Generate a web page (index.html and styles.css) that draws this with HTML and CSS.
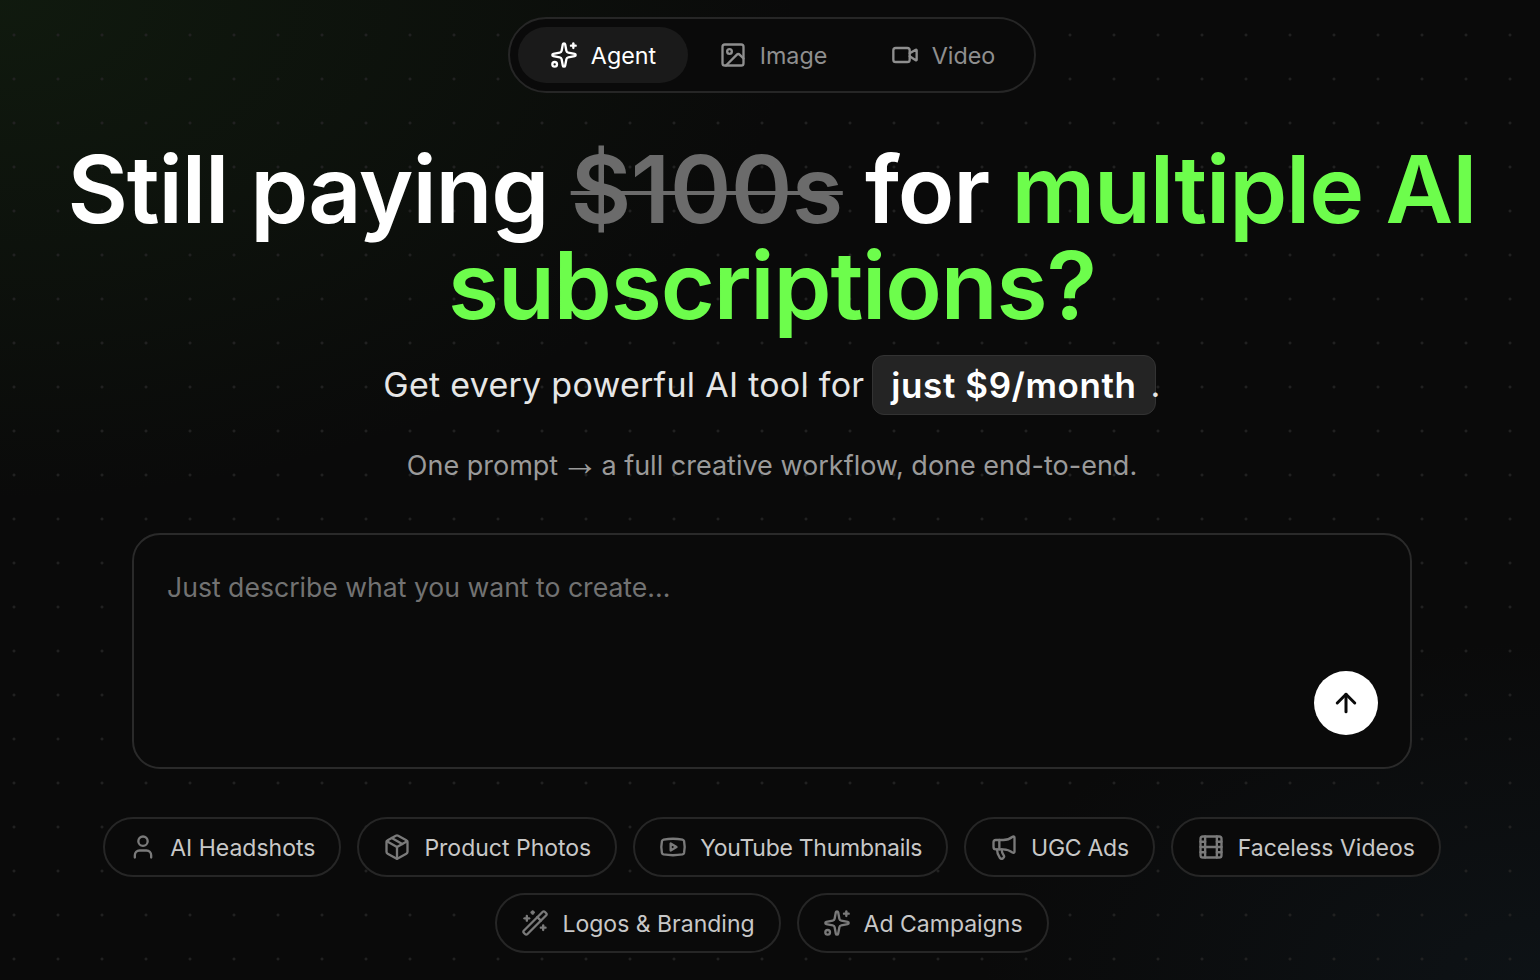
FILE: index.html
```html
<!DOCTYPE html>
<html lang="en">
<head>
    <meta charset="UTF-8">
    <meta name="viewport" content="width=device-width, initial-scale=1.0">
    <title>Still paying for multiple AI subscriptions?</title>
    <link rel="stylesheet" href="styles.css">
</head>
<body>
    <div class="page">
        <!-- mode switch -->
        <nav class="modes">
            <div class="mode active">
                <svg class="icon" viewBox="0 0 24 24"><path d="M11.017 2.814a1 1 0 0 1 1.966 0l1.051 5.558a2 2 0 0 0 1.594 1.594l5.558 1.051a1 1 0 0 1 0 1.966l-5.558 1.051a2 2 0 0 0-1.594 1.594l-1.051 5.558a1 1 0 0 1-1.966 0l-1.051-5.558a2 2 0 0 0-1.594-1.594l-5.558-1.051a1 1 0 0 1 0-1.966l5.558-1.051a2 2 0 0 0 1.594-1.594z"/><path d="M20 2v4"/><path d="M22 4h-4"/><circle cx="4" cy="20" r="2"/></svg>
                <span>Agent</span>
            </div>
            <div class="mode">
                <svg class="icon" viewBox="0 0 24 24"><rect x="3" y="3" width="18" height="18" rx="2"/><circle cx="9" cy="9" r="2"/><path d="m21 15-3.086-3.086a2 2 0 0 0-2.828 0L6 21"/></svg>
                <span>Image</span>
            </div>
            <div class="mode">
                <svg class="icon" viewBox="0 0 24 24"><path d="m16 13 5.223 3.482a.5.5 0 0 0 .777-.416V7.87a.5.5 0 0 0-.752-.432L16 10.5"/><rect x="2" y="6" width="14" height="12" rx="2"/></svg>
                <span>Video</span>
            </div>
        </nav>

        <!-- headline -->
        <h1 class="headline">Still paying <s class="old-price">$100s</s> for <span class="accent">multiple AI subscriptions?</span></h1>
        <p class="subline">Get every powerful AI tool for <span class="price-tag">just $9/month</span>.</p>
        <p class="tagline">One prompt <span class="arrow">→</span> a full creative workflow, done end-to-end.</p>

        <!-- prompt box -->
        <div class="prompt">
            <div class="prompt-text">Just describe what you want to create...</div>
            <button class="send" type="button" aria-label="Send">
                <svg class="icon" viewBox="0 0 24 24"><path d="m5 12 7-7 7 7"/><path d="M12 19V5"/></svg>
            </button>
        </div>

        <!-- suggestions -->
        <div class="chips">
            <div class="chip">
                <svg class="icon" viewBox="0 0 24 24"><path d="M19 21v-2a4 4 0 0 0-4-4H9a4 4 0 0 0-4 4v2"/><circle cx="12" cy="7" r="4"/></svg>
                <span>AI Headshots</span>
            </div>
            <div class="chip">
                <svg class="icon" viewBox="0 0 24 24"><path d="M11 21.73a2 2 0 0 0 2 0l7-4A2 2 0 0 0 21 16V8a2 2 0 0 0-1-1.73l-7-4a2 2 0 0 0-2 0l-7 4A2 2 0 0 0 3 8v8a2 2 0 0 0 1 1.73z"/><path d="M12 22V12"/><path d="m3.3 7 8.7 5 8.7-5"/><path d="m7.5 4.27 9 5.15"/></svg>
                <span>Product Photos</span>
            </div>
            <div class="chip tight">
                <svg class="icon" viewBox="0 0 24 24"><path d="M2.5 17a24.12 24.12 0 0 1 0-10 2 2 0 0 1 1.4-1.4 49.56 49.56 0 0 1 16.2 0A2 2 0 0 1 21.5 7a24.12 24.12 0 0 1 0 10 2 2 0 0 1-1.4 1.4 49.55 49.55 0 0 1-16.2 0A2 2 0 0 1 2.5 17"/><path d="m10 15 5-3-5-3z"/></svg>
                <span>YouTube Thumbnails</span>
            </div>
            <div class="chip tight">
                <svg class="icon" viewBox="0 0 24 24"><path d="M11 6a13 13 0 0 0 8.4-2.8A1 1 0 0 1 21 4v12a1 1 0 0 1-1.6.8A13 13 0 0 0 11 14H5a2 2 0 0 1-2-2V8a2 2 0 0 1 2-2z"/><path d="M6 14a12 12 0 0 0 2.4 7.2 2 2 0 0 0 3.2-2.4A8 8 0 0 1 10 14"/><path d="M8 6v8"/></svg>
                <span>UGC Ads</span>
            </div>
            <div class="chip">
                <svg class="icon" viewBox="0 0 24 24"><rect x="3" y="3" width="18" height="18" rx="2"/><path d="M7 3v18"/><path d="M3 7.5h4"/><path d="M3 12h18"/><path d="M3 16.5h4"/><path d="M17 3v18"/><path d="M17 7.5h4"/><path d="M17 16.5h4"/></svg>
                <span>Faceless Videos</span>
            </div>
            <div class="chip">
                <svg class="icon" viewBox="0 0 24 24"><path d="m21.64 3.64-1.28-1.28a1.21 1.21 0 0 0-1.72 0L2.36 18.64a1.21 1.21 0 0 0 0 1.72l1.28 1.28a1.2 1.2 0 0 0 1.72 0L21.64 5.36a1.2 1.2 0 0 0 0-1.72"/><path d="m14 7 3 3"/><path d="M5 6v4"/><path d="M19 14v4"/><path d="M10 2v2"/><path d="M7 8H3"/><path d="M21 16h-4"/><path d="M11 3H9"/></svg>
                <span>Logos &amp; Branding</span>
            </div>
            <div class="chip">
                <svg class="icon" viewBox="0 0 24 24"><path d="M11.017 2.814a1 1 0 0 1 1.966 0l1.051 5.558a2 2 0 0 0 1.594 1.594l5.558 1.051a1 1 0 0 1 0 1.966l-5.558 1.051a2 2 0 0 0-1.594 1.594l-1.051 5.558a1 1 0 0 1-1.966 0l-1.051-5.558a2 2 0 0 0-1.594-1.594l-5.558-1.051a1 1 0 0 1 0-1.966l5.558-1.051a2 2 0 0 0 1.594-1.594z"/><path d="M20 2v4"/><path d="M22 4h-4"/><circle cx="4" cy="20" r="2"/></svg>
                <span>Ad Campaigns</span>
            </div>
        </div>
    </div>
</body>
</html>
```

FILE: styles.css
```css
* {
    margin: 0;
    padding: 0;
    box-sizing: border-box;
    font-family: Inter, "Liberation Sans", sans-serif;
}

html,
body {
    height: 980px;
    overflow: hidden;
}

body {
    background-color: #0a0a0a;
    background-image:
        radial-gradient(circle at 14px 35px, #212121 1.2px, transparent 1.8px),
        radial-gradient(ellipse 800px 500px at 0 0, rgba(38, 84, 30, 0.21), transparent),
        radial-gradient(ellipse 560px 340px at 100% 100%, rgba(28, 52, 70, 0.2), transparent);
    background-size: 44px 44px, auto, auto;
    color: #fff;
}

/* content sits a little right of the window centre */
.page {
    display: flex;
    flex-direction: column;
    align-items: center;
    padding: 17px 0 0 4px;
}

.icon {
    width: 28px;
    height: 28px;
    fill: none;
    stroke: currentColor;
    stroke-width: 2;
    stroke-linecap: round;
    stroke-linejoin: round;
    flex-shrink: 0;
}

/* mode switch */
.modes {
    display: flex;
    width: 528px;
    height: 76px;
    padding: 8px 6px 8px 8px;
    background: #0a0a0a;
    border: 2px solid #262626;
    border-radius: 38px;
}

.mode {
    display: flex;
    align-items: center;
    justify-content: center;
    gap: 13px;
    flex: 0 0 170px;
    height: 56px;
    border-radius: 28px;
    font-size: 23.3px;
    color: #8f8f8f;
}

.mode.active {
    background: #1a1a1a;
    color: #fff;
}

/* headline */
.headline {
    width: 1480px;
    margin-top: 48px;
    font-size: 93px;
    line-height: 96px;
    font-weight: 630;
    letter-spacing: -1.15px;
    text-align: center;
    color: #fff;
}

.old-price {
    color: #6b6b6b;
    letter-spacing: -0.3px;
    text-decoration-thickness: 4px;
}

.accent {
    color: #6dfd4c;
}

.subline {
    display: flex;
    align-items: center;
    margin-top: 22px;
    font-size: 34px;
    letter-spacing: 0.27px;
    line-height: 58px;
    color: #e6e6e6;
    white-space: pre;
}

.price-tag {
    margin: 0 -5px 0 -2px;
    padding: 0 18px;
    background: #242424;
    border: 1px solid #333;
    border-radius: 12px;
    font-size: 35px;
    letter-spacing: 0.6px;
    font-weight: 600;
    color: #fff;
}

.tagline {
    margin-top: 31px;
    font-size: 27px;
    line-height: 40px;
    color: #9a9a9a;
}

.arrow {
    margin: 0 -5px;
    font-family: "Liberation Sans", sans-serif;
    font-size: 38px;
    line-height: 0;
}

/* prompt box */
.prompt {
    display: flex;
    flex-direction: column;
    justify-content: space-between;
    width: 1280px;
    height: 236px;
    margin-top: 47px;
    padding: 34px 32px 32px 33px;
    background: #0a0a0a;
    border: 2px solid #2a2a2a;
    border-radius: 28px;
}

.prompt-text {
    font-size: 26.6px;
    line-height: 36px;
    color: #727272;
}

.send {
    display: flex;
    align-items: center;
    justify-content: center;
    align-self: flex-end;
    width: 64px;
    height: 64px;
    background: #fff;
    border: none;
    border-radius: 50%;
    color: #0a0a0a;
}

.send .icon {
    width: 30px;
    height: 30px;
    stroke-width: 2.4;
}

/* suggestions */
.chips {
    display: flex;
    flex-wrap: wrap;
    justify-content: center;
    gap: 16px;
    width: 1400px;
    margin-top: 48px;
}

.chip {
    display: flex;
    align-items: center;
    gap: 13px;
    height: 60px;
    padding: 0 24px;
    background: #0a0a0a;
    border: 2px solid #262626;
    border-radius: 30px;
    font-size: 23px;
    color: #c8c8c8;
}

.chip span {
    padding-top: 2px;
}

.chip.tight {
    letter-spacing: -0.28px;
}

.chip .icon {
    color: #7a7a7a;
}
```
